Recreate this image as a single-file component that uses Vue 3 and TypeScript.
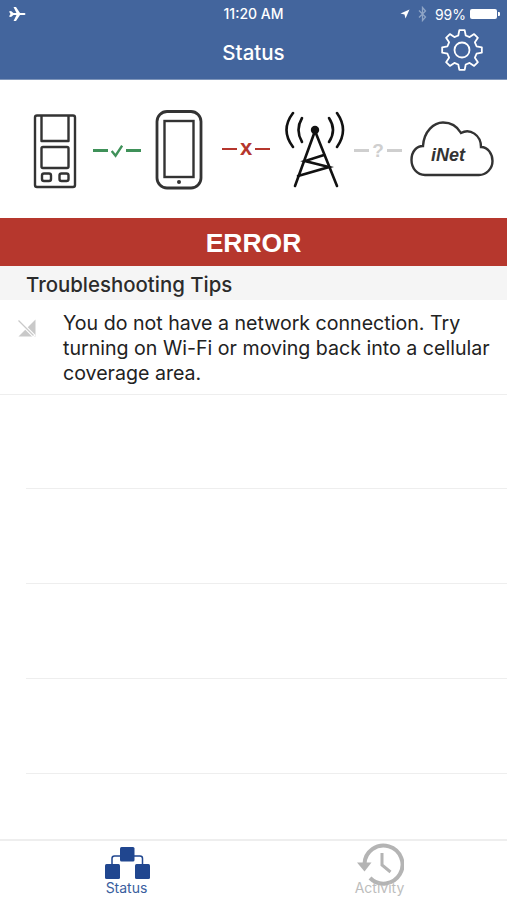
<script setup lang="ts">
const emptyRows: number[] = [1, 2, 3, 4];

function gearPath(cx: number, cy: number, outer: number, root: number, teeth: number): string {
  const pts: string[] = [];
  const step = (Math.PI * 2) / teeth;
  for (let i = 0; i < teeth; i++) {
    const a = i * step - Math.PI / 2;
    const offsets: [number, number][] = [
      [-0.32, root],
      [-0.17, outer],
      [0.17, outer],
      [0.32, root],
    ];
    for (const [o, r] of offsets) {
      const t = a + o * step;
      pts.push(`${(cx + r * Math.cos(t)).toFixed(2)} ${(cy + r * Math.sin(t)).toFixed(2)}`);
    }
  }
  return "M" + pts.join(" L") + " Z";
}
const gear = gearPath(22, 22, 20, 15, 8);
</script>

<template>
  <div class="screen">
    <header class="header">
      <div class="status-bar">
        <svg class="plane" width="18" height="16" viewBox="0 0 18 16">
          <path d="M1 5.500 L3 5 L5.500 7 L8.500 7 L5.500 1 L8 1 L12 7 L15.500 7 C17 7 17.500 7.600 17.500 8 C17.500 8.400 17 9 15.500 9 L12 9 L8 15 L5.500 15 L8.500 9 L5.500 9 L3 11 L1 10.500 L2.500 8 Z" fill="#fff" />
        </svg>
        <span class="clock">11:20 AM</span>
        <div class="status-right">
          <svg width="10" height="10" viewBox="0 0 10 10">
            <path d="M0.500 4.500 L9.500 0.500 L5.500 9.500 L4.500 5.500 Z" fill="#fff" />
          </svg>
          <svg class="bt" width="9" height="16" viewBox="0 0 9 16">
            <path d="M1 4.500 L7.500 11 L4.500 14.500 V1.500 L7.500 5 L1 11.500" fill="none" stroke="#8fa5c6" stroke-width="1.300" />
          </svg>
          <span class="pct">99%</span>
          <span class="battery"></span>
          <span class="battery-tip"></span>
        </div>
      </div>
      <div class="nav">
        <span class="nav-title">Status</span>
        <svg class="gear" width="44" height="44" viewBox="0 0 44 44">
          <path :d="gear" fill="none" stroke="#fff" stroke-width="1.800" stroke-linejoin="round" />
          <circle cx="22" cy="22" r="7.500" fill="none" stroke="#fff" stroke-width="1.800" />
        </svg>
      </div>
    </header>

    <section class="diagram">
      <svg width="44" height="90" viewBox="33 105 44 90">
        <g fill="none" stroke="#333" stroke-width="2.400" stroke-linejoin="round">
          <rect x="35" y="115.500" width="40" height="71.500" rx="2" />
          <path d="M41.500 116 V141 H68.500 V116" />
          <rect x="41.500" y="147" width="27" height="21" rx="1.500" />
          <rect x="42" y="173.500" width="9" height="7.500" rx="2" />
          <rect x="59.500" y="173.500" width="9" height="7.500" rx="2" />
        </g>
      </svg>
      <div class="link link-ok">
        <i class="dash"></i>
        <svg width="14" height="14" viewBox="0 0 14 14">
          <path d="M0.800 7 L5.300 12.500 L13 0.800" fill="none" stroke="#3f9159" stroke-width="2.800" />
        </svg>
        <i class="dash"></i>
      </div>
      <svg width="48" height="90" viewBox="155 105 48 90">
        <rect x="157" y="111.500" width="44" height="76.500" rx="10" fill="none" stroke="#333" stroke-width="2.800" />
        <rect x="164.500" y="121" width="29" height="56" fill="none" stroke="#333" stroke-width="2.400" />
        <circle cx="179" cy="182" r="2" fill="#333" />
      </svg>
      <div class="link link-err">
        <i class="dash"></i>
        <span class="glyph">x</span>
        <i class="dash"></i>
      </div>
      <svg width="64" height="90" viewBox="284 105 64 90">
        <g fill="none" stroke="#111" stroke-width="2.600" stroke-linecap="round">
          <path d="M302 118 Q295 130 302 142" />
          <path d="M293 113 Q280 130 293 147" />
          <path d="M329 118 Q337 130 329 142" />
          <path d="M337 113 Q349 130 337 147" />
          <path d="M315 131 L295 186 M315 131 L337 186" />
          <path d="M324 155 L305 161 L329 167 L298 176" />
        </g>
        <circle cx="315" cy="130" r="4.200" fill="#111" />
      </svg>
      <div class="link link-unknown">
        <i class="dash"></i>
        <span class="glyph">?</span>
        <i class="dash"></i>
      </div>
      <div class="cloud">
        <svg width="84" height="90" viewBox="410 105 84 90">
          <path d="M425 175 C417 175 411.500 168 411.500 160 C411.500 151 417 146 423 146 C424 131 434 122.500 443 122.500 C451 122.500 457 126 461 133 C470 128 481 135 481 147 C488 147 492.500 154 492.500 161 C492.500 169 486 175 479 175 Z" fill="none" stroke="#333" stroke-width="2.400" />
        </svg>
        <span class="cloud-label">iNet</span>
      </div>
    </section>

    <div class="error-banner">ERROR</div>
    <div class="tips-header">Troubleshooting Tips</div>

    <div class="tip-row">
      <svg class="no-signal" width="18" height="18" viewBox="0 0 18 18">
        <path d="M17.500 0.500 V17.500 H0.500 Z" fill="#c9c9c9" />
        <path d="M0.500 1.500 L16.500 17.500" stroke="#fff" stroke-width="3.500" />
        <path d="M0.500 1.500 L15.500 16.500" stroke="#c9c9c9" stroke-width="1.200" />
      </svg>
      <p class="tip-text">You do not have a network connection. Try turning on Wi-Fi or moving back into a cellular coverage area.</p>
    </div>

    <div class="rows">
      <div v-for="r in emptyRows" :key="r" class="empty-row"></div>
    </div>

    <nav class="tabbar">
      <div class="tab tab-active">
        <svg width="46" height="34" viewBox="0 0 46 34">
          <path d="M8 18 V12.500 Q8 10 10.500 10 H36 Q38.500 10 38.500 12.500 V18" fill="none" stroke="#20468f" stroke-width="1.500" />
          <rect x="16" y="1" width="14.500" height="14.500" rx="1.500" fill="#20468f" />
          <rect x="1" y="18" width="15" height="15" rx="1.500" fill="#20468f" />
          <rect x="31" y="18" width="15" height="15" rx="1.500" fill="#20468f" />
        </svg>
        <span class="tab-label">Status</span>
      </div>
      <div class="tab tab-idle">
        <svg width="48" height="44" viewBox="0 0 48 44">
          <path d="M8.500 22 A19 19 0 1 1 14 36" fill="none" stroke="#b4b4b4" stroke-width="4" />
          <path d="M1 20.500 H15.500 L8.500 29.500 Z" fill="#b4b4b4" />
          <path d="M26 11 V23 L34.500 30" fill="none" stroke="#b4b4b4" stroke-width="3" />
        </svg>
        <span class="tab-label">Activity</span>
      </div>
    </nav>
  </div>
</template>

<style scoped>
.screen {
  width: 507px;
  height: 900px;
  display: flex;
  flex-direction: column;
  background: #fff;
  overflow: hidden;
  font-family: Inter, "Liberation Sans", sans-serif;
  color: #222;
}
.header {
  height: 80px;
  flex: none;
  background: #43659d;
  border-bottom: 1px solid #7e95ba;
  box-sizing: border-box;
  color: #fff;
}
.status-bar {
  height: 28px;
  display: flex;
  align-items: center;
  justify-content: space-between;
  padding: 0 7px 0 8px;
  position: relative;
}
.plane { margin-top: -1px; }
.clock {
  position: absolute;
  left: 0;
  right: 0;
  text-align: center;
  font-size: 14px;
  font-weight: 500;
  margin-top: -1px;
}
.status-right {
  display: flex;
  align-items: center;
}
.bt { margin-left: 8px; }
.pct { font-size: 14px; margin-left: 8px; }
.battery {
  display: block;
  width: 27px;
  height: 10px;
  margin-left: 4px;
  border-radius: 2px;
  background: #fff;
}
.battery-tip {
  display: block;
  width: 2px;
  height: 4px;
  margin-left: 1px;
  background: #fff;
  border-radius: 0 1px 1px 0;
}
.nav {
  height: 51px;
  display: flex;
  align-items: center;
  justify-content: center;
  position: relative;
}
.nav-title {
  font-size: 20.500px;
  font-weight: 500;
  margin-top: -2px;
}
.gear {
  position: absolute;
  left: 440px;
  top: 0;
}
.diagram {
  height: 138px;
  flex: none;
  display: flex;
  align-items: center;
  padding: 2px 0 0 33px;
  box-sizing: border-box;
}
.diagram > svg { display: block; }
.link {
  display: flex;
  align-items: center;
  justify-content: center;
  width: 48px;
  gap: 3px;
}
.dash {
  display: block;
  width: 15px;
  height: 2.400px;
  flex: none;
}
.link-ok { margin-left: 16px; margin-right: 14px; margin-top: 1px; }
.link-ok .dash { background: #3f9159; }
.link-err { margin-left: 19px; margin-right: 14px; margin-top: -2px; }
.link-err .dash { background: #b5362d; }
.link-unknown { margin-left: 6px; margin-right: 8px; margin-top: 1px; }
.link-unknown .dash { background: #cfcfcf; }
.glyph {
  font-weight: 700;
  font-size: 19px;
  line-height: 20px;
  font-family: "Liberation Sans", sans-serif;
}
.link-err .glyph { color: #b5362d; font-size: 22px; margin-top: -3px; }
.link-unknown .glyph { color: #cfcfcf; }
.cloud { position: relative; width: 84px; height: 90px; }
.cloud svg { display: block; }
.cloud-label {
  position: absolute;
  left: 21px;
  top: 40px;
  font: italic 700 18px/20px "Liberation Sans", sans-serif;
  color: #333;
}
.error-banner {
  height: 48px;
  flex: none;
  background: #b6372d;
  color: #fff;
  font: 700 26.500px/50px "Liberation Sans", sans-serif;
  text-align: center;
}
.tips-header {
  height: 34px;
  flex: none;
  background: #f5f5f5;
  display: flex;
  align-items: center;
  padding: 2px 0 0 26px;
  box-sizing: border-box;
  font-size: 20.400px;
  font-weight: 500;
  color: #2b2b2b;
}
.tip-row {
  height: 94.500px;
  flex: none;
  box-sizing: border-box;
  border-bottom: 1px solid #eeeeee;
  display: flex;
  align-items: flex-start;
  padding: 11px 12px 0 18px;
}
.no-signal { flex: none; margin-top: 8px; }
.tip-text {
  margin: 0 0 0 27px;
  font-size: 19.600px;
  line-height: 25px;
  color: #222;
}
.rows {
  flex: 1;
  padding-left: 26px;
}
.empty-row {
  height: 94.900px;
  box-sizing: border-box;
  border-bottom: 1px solid #eeeeee;
}
.tabbar {
  height: 61px;
  flex: none;
  border-top: 2px solid #eeeeee;
  box-sizing: border-box;
  display: flex;
  background: #fff;
}
.tab {
  width: 253px;
  display: flex;
  flex-direction: column;
  align-items: center;
}
.tab-label {
  font-size: 14px;
  line-height: 16px;
}
.tab-active svg { margin-top: 5px; }
.tab-active .tab-label { color: #3a5e9e; }
.tab-idle svg { margin-top: 1px; }
.tab-idle .tab-label { color: #bdbdbd; margin-top: -6px; }
</style>
